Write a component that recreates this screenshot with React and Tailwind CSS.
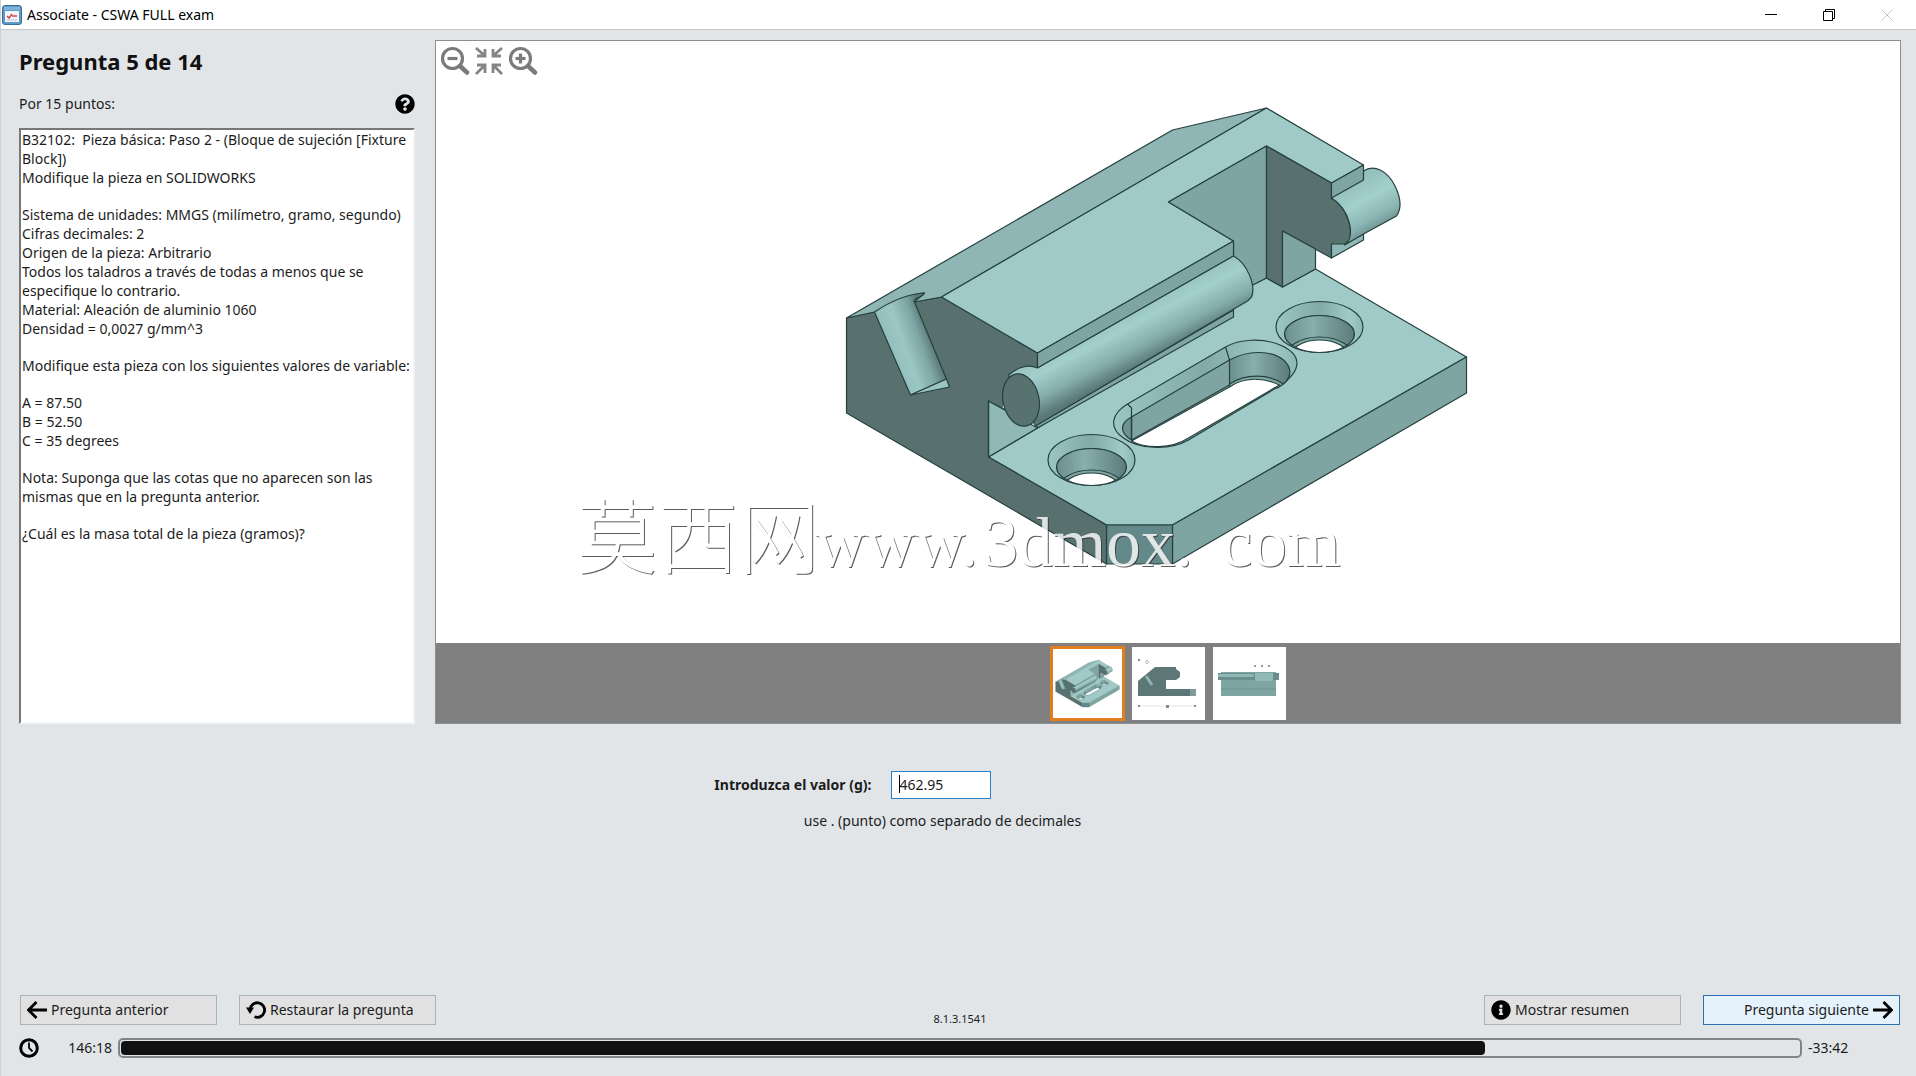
import React, { useState } from 'react';
import { FaQuestionCircle, FaInfoCircle } from 'react-icons/fa';

const paragraphs = [
  [
    'B32102:  Pieza básica: Paso 2 - (Bloque de sujeción [Fixture Block])',
    'Modifique la pieza en SOLIDWORKS',
  ],
  [
    'Sistema de unidades: MMGS (milímetro, gramo, segundo)',
    'Cifras decimales: 2',
    'Origen de la pieza: Arbitrario',
    'Todos los taladros a través de todas a menos que se especifique lo contrario.',
    'Material: Aleación de aluminio 1060',
    'Densidad = 0,0027 g/mm^3',
  ],
  ['Modifique esta pieza con los siguientes valores de variable:'],
  ['A = 87.50', 'B = 52.50', 'C = 35 degrees'],
  ['Nota: Suponga que las cotas que no aparecen son las mismas que en la pregunta anterior.'],
  ['¿Cuál es la masa total de la pieza (gramos)?'],
];

const AppIcon = () => (
  <svg width="20" height="20" viewBox="0 0 20 20">
    <rect x="0.5" y="0.5" width="19" height="19" rx="2.5" fill="#5b9bc8" stroke="#3d6f96" />
    <rect x="2" y="2" width="16" height="3" fill="#7fb4d8" />
    <rect x="3" y="6" width="14" height="11" fill="#f3f5f8" />
    <path d="M5 11l2 2 3-4M10 11h5" stroke="#d0454f" strokeWidth="1.5" fill="none" />
    <path d="M5 15h10" stroke="#b9c4d4" />
  </svg>
);

const Magnifier = ({ plus }) => (
  <svg width="30" height="30" viewBox="0 0 30 30" fill="none" stroke="#7b7b7b">
    <circle cx="12.5" cy="13.5" r="10" strokeWidth="3.2" />
    <path d="M20 21l7 6.500" strokeWidth="4.500" strokeLinecap="round" />
    <path d="M7.5 13.5h10" strokeWidth="3.2" />
    {plus && <path d="M12.5 8.5v10" strokeWidth="3.2" />}
  </svg>
);

const FitIcon = () => (
  <svg width="30" height="30" viewBox="0 0 30 30" fill="none" stroke="#858585" strokeWidth="2.8">
    <path d="M2 3l8 7M3 11h8V4" />
    <path d="M28 3l-8 7M27 11h-8V4" />
    <path d="M2 29l8-8M3 20h8v8" />
    <path d="M28 29l-8-8M27 20h-8v8" />
  </svg>
);

const ArrowIcon = ({ right }) => (
  <svg width="20" height="20" viewBox="0 0 20 20" fill="none" stroke="#000" strokeWidth="2.8">
    {right ? <path d="M0 10h18M10.5 2l8 8-8 8" /> : <path d="M20 10H2M9.5 2l-8 8 8 8" />}
  </svg>
);

const RestoreIcon = () => (
  <svg width="20" height="20" viewBox="0 0 20 20" fill="none">
    <path d="M4 9.5A7.300 7.300 0 1 1 8.5 16.8" stroke="#000" strokeWidth="2.8" />
    <path d="M0 7.5h8L4 14z" fill="#000" />
  </svg>
);

const ClockIcon = () => (
  <svg width="20" height="20" viewBox="0 0 20 20" fill="none" stroke="#000">
    <circle cx="10" cy="10" r="8.3" strokeWidth="3" />
    <path d="M10 4.5V10l3.5 3.5" strokeWidth="1.8" />
  </svg>
);

// Through hole of the base plate, drawn around (0, 0)
const Hole = ({ x, y }) => (
  <g transform={`translate(${x} ${y})`}>
    <ellipse rx="43.5" ry="25.5" fill="url(#chamfer)" />
    <g clipPath="url(#bore)">
      <ellipse cy="7" rx="35" ry="18.5" fill="url(#wall)" />
      <ellipse cy="30.5" rx="34" ry="20.5" fill="#7fa5a3" />
      <ellipse cy="31" rx="30" ry="18" fill="#fff" />
    </g>
    <ellipse cy="7" rx="35" ry="18.5" fill="none" />
  </g>
);

const Part = () => (
  <g stroke="#25413f" strokeWidth="1.2" strokeLinejoin="round">
    <defs>
      <linearGradient id="pin" gradientUnits="userSpaceOnUse" x1="1117" y1="310" x2="1145" y2="364">
        <stop offset="0" stopColor="#94bfbd" />
        <stop offset="0.35" stopColor="#a3cfcc" />
        <stop offset="0.7" stopColor="#84aeac" />
        <stop offset="1" stopColor="#587775" />
      </linearGradient>
      <linearGradient id="pinEnd" gradientUnits="userSpaceOnUse" x1="1353" y1="182" x2="1380" y2="230">
        <stop offset="0" stopColor="#94bfbd" />
        <stop offset="0.4" stopColor="#a3cfcc" />
        <stop offset="0.75" stopColor="#8ab5b3" />
        <stop offset="1" stopColor="#6a8d8b" />
      </linearGradient>
      <linearGradient id="groove" gradientUnits="userSpaceOnUse" x1="892" y1="352" x2="931" y2="338">
        <stop offset="0" stopColor="#93bebc" />
        <stop offset="0.35" stopColor="#9bc7c5" />
        <stop offset="0.75" stopColor="#7da5a3" />
        <stop offset="1" stopColor="#5a7a78" />
      </linearGradient>
      <linearGradient id="wall">
        <stop offset="0" stopColor="#6c8f8d" />
        <stop offset="0.4" stopColor="#86afad" />
        <stop offset="1" stopColor="#5c7c7a" />
      </linearGradient>
      <linearGradient id="chamfer">
        <stop offset="0" stopColor="#9bc6c4" />
        <stop offset="0.5" stopColor="#81aaa8" />
        <stop offset="0.85" stopColor="#a0cbc9" />
        <stop offset="1" stopColor="#8db7b5" />
      </linearGradient>
      <clipPath id="bore">
        <ellipse cy="7" rx="35" ry="18.5" />
      </clipPath>
    </defs>

    {/* base plate */}
    <path fill="#9fcac8" d="M989 457L1038 428 1234 305 1240 290 1253 285 1267 278 1283 287 1316 269 1467 357 1173 525 1107 525z" />
    <path fill="#7fa5a3" d="M1173 525L1467 357 1467 393 1173 564z" />
    <path fill="#64898a" d="M1107 525H1173V564H1107z" />
    <Hole x={1092} y={460} />
    <Hole x={1320} y={327} />

    {/* slot */}
    <path fill="url(#chamfer)" d="M1128 404L1226 347C1240 339 1262 338 1278 344 1302 353 1305 369 1280 386L1189 440C1170 451 1138 449 1124 438 1108 427 1113 413 1128 404z" />
    <path fill="url(#wall)" stroke="none" d="M1230 360C1250 349 1273 351 1284 360 1293 368 1292 377 1284 384L1230 386z" />
    <path fill="#7fa5a3" d="M1132 417L1230 360V385L1132 440z" />
    <path fill="#6f9391" d="M1132 417C1121 423 1119 432 1132 440z" />
    <path fill="none" d="M1128 404L1132 408V440" />
    <path fill="#7fa5a3" d="M1230 384C1246 373 1270 374 1284 384L1278 388 1230 388z" />
    <path fill="none" d="M1226 347L1230 360C1250 349 1273 351 1284 360 1293 368 1292 377 1284 384" />
    <path fill="#fff" d="M1132 441L1230 387C1244 377 1264 377 1280 385L1189 438C1172 449 1146 449 1132 441z" />

    {/* front face and leg */}
    <path fill="#8fb8b6" d="M989 401L1038 428 989 457z" />
    <path fill="#58716f" d="M847 318L875 312 915 302 942 297 1038 353V368C1030 363 1004 370 1002 395L989 401V457L1107 525V564L847 413z" />
    <path fill="#58716f" stroke="none" d="M989 400L1003 409 1010 375 1038 367 1020 345 980 345z" />
    <path fill="none" d="M989 457V401L1008 411" />

    {/* slanted face */}
    <path fill="#8fb5b5" d="M847 318L1173 130 1267 108 942 297 915 302 925 293C905 294 890 305 875 312z" />

    {/* top face */}
    <path fill="#9fcac8" d="M942 297L1267 108 1364 165 1332 183 1267 146 1169 202 1234 241 1038 353z" />
    <path fill="#7fa5a3" d="M1267 146L1169 202 1234 241V256L1253 285 1267 278z" />
    <path fill="#58716f" d="M1267 146L1332 183V198C1346 206 1354 228 1350 241 1345 246 1337 247 1332 244V258L1283 231V287L1267 278z" />
    <path fill="#7fa5a3" d="M1283 231L1316 249V269L1283 287z" />
    <path fill="#7fa5a3" d="M1332 183L1364 165V181L1332 199z" />
    <path fill="#8fb8b6" d="M1332 258L1364 240V234L1346 244 1332 244z" />
    <path fill="url(#pinEnd)" d="M1332 198L1364 180V171C1374 164 1388 170 1396 187 1402 200 1402 209 1397 216L1364 234 1345 245C1357 237 1350 209 1332 198z" />

    {/* clamping pin */}
    <path fill="#7fa5a3" d="M1038 353L1234 241V256L1038 368z" />
    <path fill="#7fa5a3" d="M1037 425L1234 310V317L1038 428z" />
    <path fill="url(#pin)" d="M1009 375C1020 366 1029 364 1038 368L1234 256C1247 263 1257 285 1252 297L1248 301 1036 426z" />
    <ellipse cx="1021.500" cy="400" rx="18" ry="26.500" transform="rotate(-12 1021.500 400)" fill="#587270" />

    {/* groove */}
    <path fill="url(#groove)" d="M875 312C887 304 905 294 925 293 924 297 912 299 915 302L947 379 911 395z" />
    <path fill="#9bc4c2" d="M911 395L947 379 950 387z" />
  </g>
);

const FrontView = () => (
  <svg className="size-full" viewBox="0 0 73 73">
    <path fill="#5c7775" d="M6 34L23 20H44V22L48 25V30L44 33H34V42H58V49H6z" />
    <path fill="#7f9c9a" d="M58 42h6v7h-6z" />
    <path stroke="#8bb5b3" strokeWidth="3" d="M14 29l6 9" />
    <path stroke="#d5d5d5" strokeWidth="0.6" d="M8 59H64" />
    <path fill="#888" d="M34 58h3v3h-3zM6 58h2v2h-2zM62 58h2v2h-2zM6 12h2v2h-2z" />
    <circle cx="15" cy="15" r="1.500" fill="none" stroke="#aaa" strokeWidth="0.8" />
  </svg>
);

const SideView = () => (
  <svg className="size-full" viewBox="0 0 73 73">
    <path fill="#7fa5a3" d="M8 25H63V49H8z" />
    <path fill="#6a8d8b" d="M5 26H66V33H5z" />
    <path fill="#8fb8b6" d="M5 27H41V30H5zM42 26H60V34H42z" />
    <path fill="none" stroke="#6c9391" strokeWidth="0.8" d="M8 42H63M41 26V33" />
    <path fill="#999" d="M41 18h2v2h-2zM48 18h2v2h-2zM55 18h2v2h-2z" />
  </svg>
);

const views = [
  {
    name: 'Isométrica',
    drawing: (
      <svg className="size-full" viewBox="822 80 670 510">
        <Part />
      </svg>
    ),
  },
  { name: 'Alzado', drawing: <FrontView /> },
  { name: 'Planta', drawing: <SideView /> },
];

const buttonClass = 'flex h-[30px] w-[197px] items-center gap-1 border border-[#adb2b5] bg-[#e1e1e1] px-1.5';

const App = () => {
  const [value, setValue] = useState('462.95');
  const [view, setView] = useState(0);

  return (
    <div className="flex min-h-screen flex-col border-l border-[#cdd1d4] bg-[#e1e5e8] font-['Noto_Sans',sans-serif] text-sm text-[#1c1c1c]">
      <header className="flex h-[30px] items-center border-b border-[#c4c8ca] bg-white pl-px text-black">
        <AppIcon />
        <span className="ml-[5px] grow">Associate - CSWA FULL exam</span>
        <button aria-label="Minimizar" className="flex w-[58px] justify-center">
          <svg width="12" height="12" stroke="#000"><path d="M0 5.500h12" /></svg>
        </button>
        <button aria-label="Restaurar" className="flex w-[58px] justify-center">
          <svg width="12" height="12" fill="none" stroke="#000"><path d="M0.500 2.500h9v9h-9zM2.500 2.500v-2h9v9h-2" /></svg>
        </button>
        <button aria-label="Cerrar" className="flex w-[58px] justify-center" disabled>
          <svg width="12" height="12" stroke="#c8c8c8"><path d="M0 0l12 12M12 0L0 12" /></svg>
        </button>
      </header>

      <main className="flex grow flex-col">
        <div className="flex grow gap-5 pt-2.5 pr-[15px] pl-[18px]">
          <section className="flex w-[396px] shrink-0 flex-col">
            <h1 className="pt-[7px] text-[22px] leading-7 font-bold text-[#111]">Pregunta 5 de 14</h1>
            <div className="mt-[19px] flex h-5 items-center justify-between">
              <p>Por 15 puntos:</p>
              <button aria-label="Ayuda"><FaQuestionCircle className="size-5 text-black" /></button>
            </div>
            <div className="mt-3.5 flex grow flex-col gap-[18px] border-2 border-t-[#777] border-r-[#f1f3f4] border-b-[#f1f3f4] border-l-[#777] bg-white px-px leading-[19px] whitespace-pre-wrap">
              {paragraphs.map((lines, i) => (
                <div key={i}>
                  {lines.map((line) => (
                    <p key={line}>{line}</p>
                  ))}
                </div>
              ))}
            </div>
          </section>

          <section className="flex min-w-0 grow flex-col border border-[#8b8f92] bg-white">
            <div className="relative grow">
              <svg className="absolute inset-0 size-full" viewBox="437 41 1463 602">
                <Part />
                <g className="drop-shadow-[1px_1px_0_#333]" fill="#fff" opacity="0.8">
                  <text x="577" y="567" fontSize="81" fontFamily="'Noto Sans CJK SC', sans-serif" fontWeight="300">莫西网</text>
                  <text y="566" fontSize="69" fontFamily="'Liberation Serif', serif">
                    <tspan x="816">www.</tspan>
                    <tspan x="984">3dmox.</tspan>
                    <tspan x="1222">com</tspan>
                  </text>
                </g>
              </svg>
              <div className="absolute top-1 left-1 flex gap-1">
                <button aria-label="Alejar"><Magnifier /></button>
                <button aria-label="Ajustar"><FitIcon /></button>
                <button aria-label="Acercar"><Magnifier plus /></button>
              </div>
            </div>
            <div className="flex h-20 items-center justify-center gap-1.5 bg-[#808080]">
              {views.map((item, i) => (
                <button
                  key={item.name}
                  aria-label={item.name}
                  onClick={() => setView(i)}
                  className={`size-[75px] bg-white bg-clip-padding ${view === i ? 'border-3 border-[#e07f1d]' : 'border border-transparent'}`}
                >
                  {item.drawing}
                </button>
              ))}
            </div>
          </section>
        </div>

        <section className="pt-[47px] pb-[164px]">
          <div className="flex items-center">
            <label htmlFor="answer" className="w-5/11 text-right font-bold">Introduzca el valor (g):</label>
            <div className="relative ml-5">
              <input
                id="answer"
                value={value}
                onChange={(e) => setValue(e.target.value)}
                className="block h-7 w-[100px] border border-[#2a7fc4] bg-white px-[7px] pb-0.5 outline-none"
              />
              <span className="absolute top-1 left-2 h-[18px] w-px bg-black" />
            </div>
          </div>
          <p className="mt-3 pr-8 text-center leading-5">use . (punto) como separado de decimales</p>
        </section>
      </main>

      <footer className="pb-[18px]">
        <div className="flex justify-between pr-4 pl-[19px]">
          <div className="flex gap-[22px]">
            <button className={buttonClass}><ArrowIcon />Pregunta anterior</button>
            <button className={buttonClass}><RestoreIcon />Restaurar la pregunta</button>
          </div>
          <span className="self-end text-[11px] leading-3">8.1.3.1541</span>
          <div className="flex gap-[22px]">
            <button className={buttonClass}><FaInfoCircle className="size-5 text-black" />Mostrar resumen</button>
            <button className="flex h-[30px] w-[197px] items-center justify-end gap-1 border border-[#2a6fb0] bg-[#e5f1fb] px-1.5">
              Pregunta siguiente
              <ArrowIcon right />
            </button>
          </div>
        </div>
        <div className="mt-[13px] flex h-5 items-center gap-1.5 pl-[18px]">
          <ClockIcon />
          <span className="w-[67px] text-right">146:18</span>
          <div role="progressbar" aria-label="Tiempo transcurrido" aria-valuenow={81} className="h-5 grow rounded-[5px] border-2 border-[#808488] p-px">
            <div className="h-full w-[81.3%] rounded-sm bg-[#111]" />
          </div>
          <span className="w-[108px]">-33:42</span>
        </div>
      </footer>
    </div>
  );
};

export default App;
